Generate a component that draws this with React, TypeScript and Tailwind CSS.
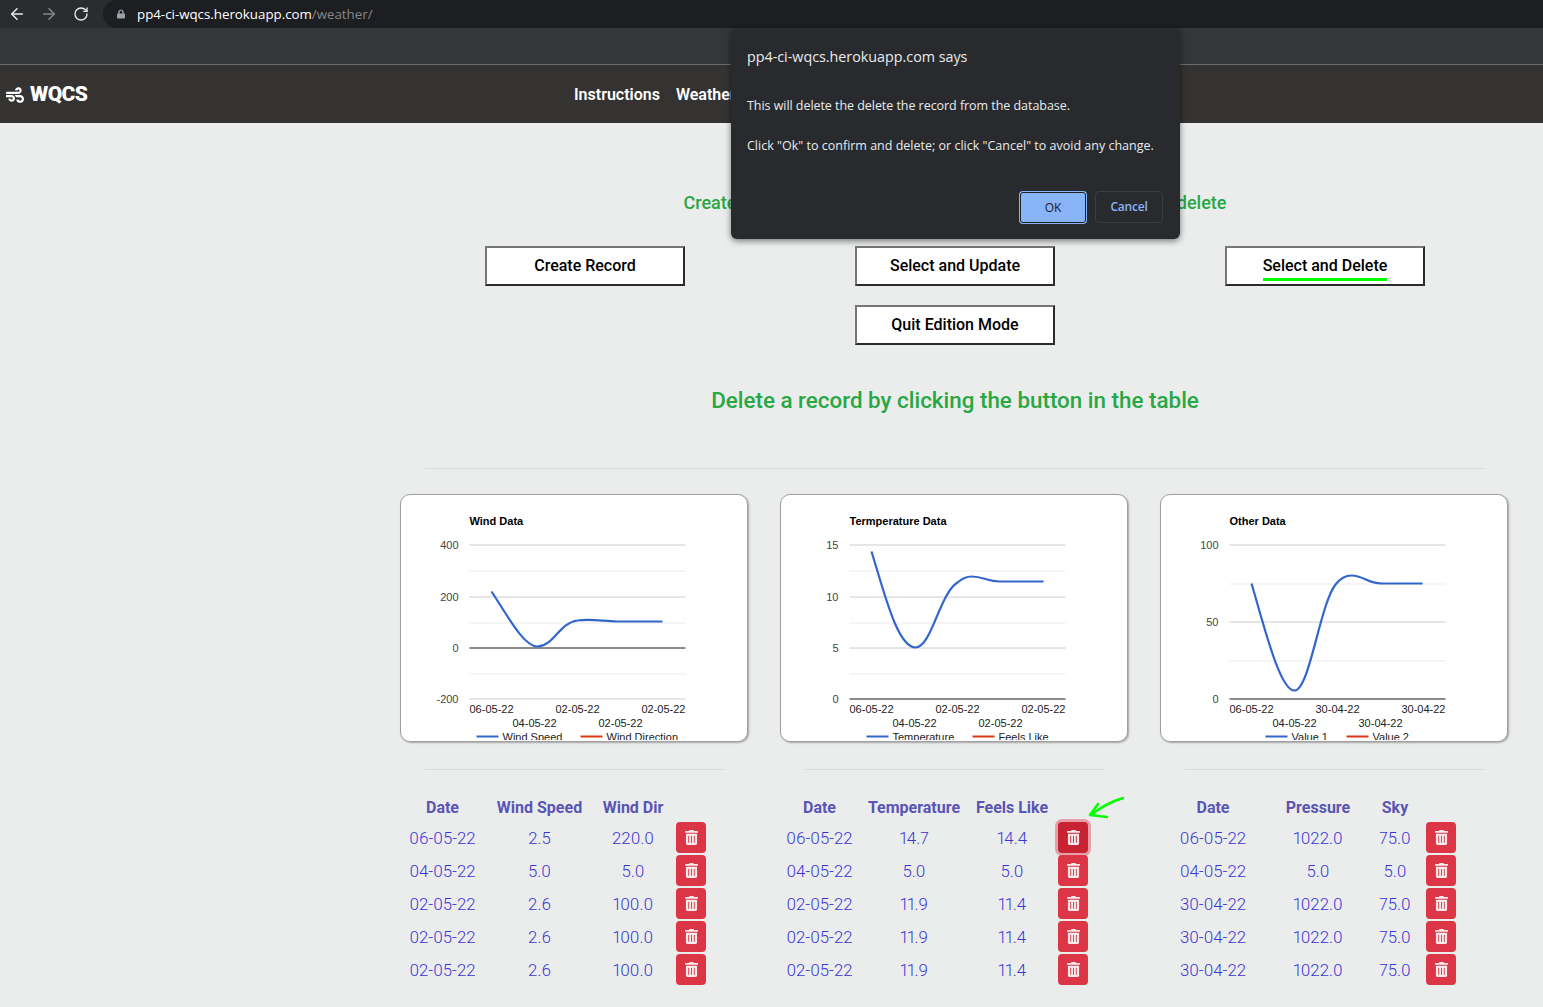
import React from 'react';
import { ArrowLeft, ArrowRight, RotateCw } from 'lucide-react';
import { FaLock, FaTrashAlt, FaWind } from 'react-icons/fa';

type ChartProps = {
    title: string;
    ticks: { label: string; y: number }[];
    minor: number[];
    axisY: number;
    curve: string;
    dates: string[];
    legendA: { x: number; text: string };
    legendB: { x: number; text: string };
};

const charts: ChartProps[] = [
    {
        title: 'Wind Data',
        ticks: [
            { label: '400', y: 51 },
            { label: '200', y: 103 },
            { label: '0', y: 154 },
            { label: '-200', y: 205 },
        ],
        minor: [77, 129, 180],
        axisY: 154,
        curve: 'M92 98 C108 122 124 153 138 153 C154 153 160 129 178 127 C192 125 205 128 217 128 L263 128',
        dates: ['06-05-22', '04-05-22', '02-05-22', '02-05-22', '02-05-22'],
        legendA: { x: 77, text: 'Wind Speed' },
        legendB: { x: 181, text: 'Wind Direction' },
    },
    {
        title: 'Termperature Data',
        ticks: [
            { label: '15', y: 51 },
            { label: '10', y: 103 },
            { label: '5', y: 154 },
            { label: '0', y: 205 },
        ],
        minor: [77, 129, 180],
        axisY: 205,
        curve: 'M92 58 C105 100 118 154 136 154 C152 154 160 100 178 89 Q185 83 192 83 C204 83 208 88 220 88 L264 88',
        dates: ['06-05-22', '04-05-22', '02-05-22', '02-05-22', '02-05-22'],
        legendA: { x: 87, text: 'Temperature' },
        legendB: { x: 193, text: 'Feels Like' },
    },
    {
        title: 'Other Data',
        ticks: [
            { label: '100', y: 51 },
            { label: '50', y: 128 },
            { label: '0', y: 205 },
        ],
        minor: [90, 167],
        axisY: 205,
        curve: 'M92 90 C104 130 120 197 135 197 C150 197 160 112 176 91 Q183 82 192 82 C204 82 208 90 222 90 L263 90',
        dates: ['06-05-22', '04-05-22', '30-04-22', '30-04-22', '30-04-22'],
        legendA: { x: 106, text: 'Value 1' },
        legendB: { x: 187, text: 'Value 2' },
    },
];

const tables = [
    {
        className: 'ml-[11px] grid-cols-[93px_101px_86px_30px]',
        head: ['Date', 'Wind Speed', 'Wind Dir'],
        rows: [
            ['06-05-22', '2.5', '220.0'],
            ['04-05-22', '5.0', '5.0'],
            ['02-05-22', '2.6', '100.0'],
            ['02-05-22', '2.6', '100.0'],
            ['02-05-22', '2.6', '100.0'],
        ],
    },
    {
        className: 'ml-[12px] grid-cols-[85px_104px_92px_30px]',
        head: ['Date', 'Temperature', 'Feels Like'],
        rows: [
            ['06-05-22', '14.7', '14.4'],
            ['04-05-22', '5.0', '5.0'],
            ['02-05-22', '11.9', '11.4'],
            ['02-05-22', '11.9', '11.4'],
            ['02-05-22', '11.9', '11.4'],
        ],
    },
    {
        className: 'ml-[9px] grid-cols-[118px_92px_62px_30px]',
        head: ['Date', 'Pressure', 'Sky'],
        rows: [
            ['06-05-22', '1022.0', '75.0'],
            ['04-05-22', '5.0', '5.0'],
            ['30-04-22', '1022.0', '75.0'],
            ['30-04-22', '1022.0', '75.0'],
            ['30-04-22', '1022.0', '75.0'],
        ],
    },
];

const Chart = ({ title, ticks, minor, axisY, curve, dates, legendA, legendB }: ChartProps) => {
    const grid = ticks.map((t) => t.y);
    return (
        <div className="w-[348px] h-[248px] bg-white border-[1.5px] border-[#a0a0a0] rounded-[10px] overflow-hidden shadow-[1px_1px_2px_rgba(0,0,0,0.3)]">
            <svg width="345" height="245" viewBox="1.5 1.5 345 245" className="block font-['Liberation_Sans',sans-serif] text-[11px]">
                <text x="70" y="31" fontWeight="700" fill="#000">{title}</text>
                {minor.map((y) => (
                    <line key={y} x1="70" x2="286" y1={y + 0.5} y2={y + 0.5} stroke="#ebebeb" />
                ))}
                {grid.map((y) => (
                    <line key={y} x1="70" x2="286" y1={y + 0.5} y2={y + 0.5} stroke="#cccccc" />
                ))}
                <line x1="70" x2="286" y1={axisY + 0.5} y2={axisY + 0.5} stroke="#333333" />
                {ticks.map((t) => (
                    <text key={t.label} x="59" y={t.y + 4} textAnchor="end" fill="#444">{t.label}</text>
                ))}
                <path d={curve} fill="none" stroke="#3366cc" strokeWidth="2.2" />
                <text x="70" y="219" fill="#222">{dates[0]}</text>
                <text x="113" y="233" fill="#222">{dates[1]}</text>
                <text x="156" y="219" fill="#222">{dates[2]}</text>
                <text x="199" y="233" fill="#222">{dates[3]}</text>
                <text x="286" y="219" textAnchor="end" fill="#222">{dates[4]}</text>
                <line x1={legendA.x} x2={legendA.x + 22} y1="243" y2="243" stroke="#3366cc" strokeWidth="2" />
                <text x={legendA.x + 26} y="247" fill="#222">{legendA.text}</text>
                <line x1={legendB.x} x2={legendB.x + 22} y1="243" y2="243" stroke="#dc3912" strokeWidth="2" />
                <text x={legendB.x + 26} y="247" fill="#222">{legendB.text}</text>
            </svg>
        </div>
    );
};

const ModeButton = ({ label, active }: { label: string; active?: boolean }) => (
    <button className="w-[200px] h-10 bg-white border-2 border-t-[#767676] border-l-[#767676] border-r-[#2b2b2b] border-b-[#2b2b2b] flex items-center justify-center text-black text-base font-['Roboto',sans-serif] font-medium">
        <span className={active ? 'border-b-[3px] border-[#00ff00] h-[27px] leading-[24px] mt-[3px]' : ''}>{label}</span>
    </button>
);

const TrashButton = ({ focused }: { focused?: boolean }) => (
    <button
        className={`w-[30px] h-[31px] rounded-[4px] flex items-center justify-center text-white/90 ${
            focused ? 'bg-[#c82333] shadow-[0_0_0_3px_rgba(225,83,97,0.5)]' : 'bg-[#dc3545]'
        }`}
    >
        <FaTrashAlt className="w-[13px] h-[15px]" />
    </button>
);

const App = () => {
    return (
        <div className="relative w-[1543px] h-[1007px] overflow-hidden bg-[#ebedec] font-['Roboto',sans-serif]">
            {/* Browser chrome */}
            <div className="h-7 bg-[#2b2c30] flex items-center pl-[8px] text-white">
                <ArrowLeft className="w-[18px] h-[18px] text-[#e8eaed]" />
                <ArrowRight className="w-[18px] h-[18px] ml-[14px] text-[#85878b]" />
                <RotateCw className="w-[16px] h-[16px] ml-[15px] text-[#e8eaed]" />
                <div className="ml-[14px] flex-1 h-7 bg-[#1d1e21] rounded-l-full flex items-center pl-[14px] font-['Open_Sans',sans-serif] text-[13.3px] leading-[30px]">
                    <FaLock className="w-[8px] h-[10px] text-[#9aa0a6] mr-[12px]" />
                    <span className="text-white">pp4-ci-wqcs.herokuapp.com</span>
                    <span className="text-[#85878b]">/weather/</span>
                </div>
            </div>
            <div className="h-[37px] bg-[#35363a] border-b border-[#6a6b6e]" />

            {/* Navbar */}
            <nav className="h-[58px] bg-[#343331] flex items-center pt-[2px] text-white">
                <div className="flex items-center pl-[5px] w-[574px]">
                    <FaWind className="w-[20px] h-[18px]" />
                    <span className="ml-[5px] text-[21px] font-black tracking-[-0.6px]">WQCS</span>
                </div>
                <span className="text-base font-semibold">Instructions</span>
                <span className="ml-4 text-base font-semibold">Weather</span>
            </nav>

            {/* Edit mode */}
            <div className="ml-[400px] w-[1110px] pt-[67px]">
                <h2 className="h-[26px] leading-[26px] text-center text-[18px] font-medium text-[#28a745]">
                    Create a new record, or select an existing record to update or delete
                </h2>
                <div className="mt-[30px] grid grid-cols-3 justify-items-center">
                    <ModeButton label="Create Record" />
                    <ModeButton label="Select and Update" />
                    <ModeButton label="Select and Delete" active />
                </div>
                <div className="mt-[19px] flex justify-center">
                    <ModeButton label="Quit Edition Mode" />
                </div>
                <h2 className="mt-[41px] h-[29px] leading-[29px] text-center text-[22.4px] font-medium text-[#28a745]">
                    Delete a record by clicking the button in the table
                </h2>
                <hr className="mt-[53px] mx-[25px] border-[#d9dad9]" />
            </div>

            {/* Charts */}
            <div className="mt-[25px] ml-[400px] flex gap-8">
                {charts.map((chart) => (
                    <Chart key={chart.title} {...chart} />
                ))}
            </div>

            {/* Tables */}
            <div className="mt-[27px] ml-[385px] grid grid-cols-[380px_380px_380px]">
                {tables.map((table, t) => (
                    <div key={t} className="relative">
                        <hr className="mx-[40px] border-[#d9dad9]" />
                        <div className={`mt-[24px] grid ${table.className}`}>
                            {table.head.map((h) => (
                                <div key={h} className="h-[28px] leading-[28px] text-center text-base font-bold text-[#5a55b5]">
                                    {h}
                                </div>
                            ))}
                            <div />
                            {table.rows.map((row, r) => (
                                <React.Fragment key={r}>
                                    {row.map((cell, c) => (
                                        <div key={c} className="h-[33px] leading-[33px] text-center text-[16.8px] font-light text-[#3a34d6] [font-feature-settings:'pnum']">
                                            {cell}
                                        </div>
                                    ))}
                                    <TrashButton focused={t === 1 && r === 0} />
                                </React.Fragment>
                            ))}
                        </div>
                        {t === 1 && (
                            <svg width="40" height="24" viewBox="0 0 40 24" className="absolute left-[322px] top-[26px]">
                                <path d="M36 3 C26 6 14 12 4 20 M3 20 L11 9 M3 20 L20 22" fill="none" stroke="#00ff00" strokeWidth="2.5" strokeLinecap="round" />
                            </svg>
                        )}
                    </div>
                ))}
            </div>

            {/* Confirm dialog */}
            <div className="absolute left-[731px] top-[28px] w-[449px] h-[211px] bg-[#292a2d] rounded-[6px] shadow-[0_2px_6px_rgba(0,0,0,0.5)] font-['Open_Sans',sans-serif] text-[#e8eaed]">
                <div className="absolute left-4 top-[19px] text-[14.3px] leading-5">pp4-ci-wqcs.herokuapp.com says</div>
                <div className="absolute left-4 top-[69px] text-[12.5px] leading-[18px] tracking-[-0.05px]">This will delete the delete the record from the database.</div>
                <div className="absolute left-4 top-[109px] text-[12.5px] leading-[18px]">Click "Ok" to confirm and delete; or click "Cancel" to avoid any change.</div>
                <div className="absolute right-[17px] top-[163px] flex items-start gap-2">
                    <button className="w-[68px] h-[33px] rounded-[4px] bg-[#8ab4f8] border-2 border-[#8ab4f8] outline outline-1 outline-offset-[-2px] outline-[#202124] text-[#202124] text-[12px]">OK</button>
                    <button className="w-[68px] h-[32px] rounded-[4px] border border-[#3c3d40] text-[#8ab4f8] text-[12px] font-semibold tracking-[-0.2px]">Cancel</button>
                </div>
            </div>
        </div>
    );
};

export default App;
